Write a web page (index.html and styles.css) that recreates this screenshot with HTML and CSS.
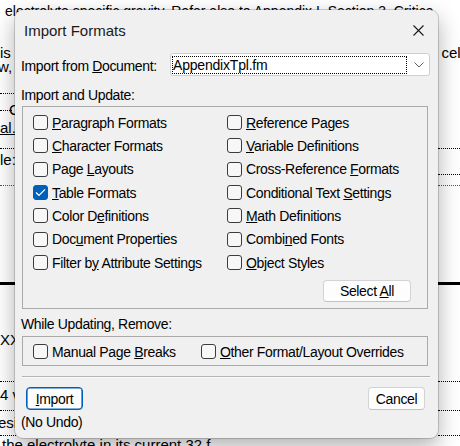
FILE: index.html
```html
<!DOCTYPE html>
<html>
<head>
<meta charset="utf-8">
<link rel="stylesheet" href="styles.css">
</head>
<body>
<div class="doc">
  <div class="dl r1"><span class="topline">electrolyte specific gravity. Refer also to Appendix I, Section 3, Critica</span></div>
  <div class="dl r2"><span>is</span><span class="rt">cell</span></div>
  <div class="dl r3"><span class="cut">w,</span></div>
  <div class="dl r4"><span class="dot"></span></div>
  <div class="dl r5"><span class="dot short"></span><span class="cut2">C</span></div>
  <div class="dl r6"><span class="ul">al.</span></div>
  <div class="dl r7"><span class="dot"></span><span class="dot r"></span></div>
  <div class="dl r8"><span>le:</span></div>
  <div class="dl r9"><span></span><span class="dot r"></span></div>
  <div class="dl r10"><span class="dot light"></span><span class="dot r light"></span></div>
  <div class="dl r11"><span class="thick"></span></div>
  <div class="dl r12"><span>XX</span></div>
  <div class="dl r13"><span class="dot"></span><span class="dot r"></span></div>
  <div class="dl r14"><span>4 v</span></div>
  <div class="dl r15"><span class="dot"></span><span class="dot r"></span></div>
  <div class="dl r16"><span class="cut">esis</span></div>
  <div class="dl r17"><span class="dot"></span><span class="dot r"></span></div>
  <div class="dl r18"><span class="bottomline">the electrolyte in its current 32 f</span></div>
</div>

<div class="dialog">
  <div class="titlebar">
    <span class="title">Import Formats</span>
    <svg class="close" width="11" height="11" viewBox="0 0 11 11"><path d="M0.5 0.5 L10.5 10.5 M10.5 0.5 L0.5 10.5" stroke="#1a1a1a" stroke-width="1.1" fill="none"/></svg>
  </div>
  <div class="body">
    <div class="docrow">
      <span class="lbl">Import from <u>D</u>ocument:</span>
      <div class="combo">
        <div class="combo-text">AppendixTpl.fm</div>
        <svg class="chev" width="10" height="6" viewBox="0 0 10 6"><path d="M0.5 0.5 L5 5 L9.5 0.5" stroke="#606060" stroke-width="1" fill="none"/></svg>
      </div>
    </div>

    <div class="section-label first">Import and Update:</div>
    <div class="group main">
      <div class="grid">
        <label class="item"><span class="cb"></span><span><u>P</u>aragraph Formats</span></label>
        <label class="item"><span class="cb"></span><span><u>R</u>eference Pages</span></label>
        <label class="item"><span class="cb"></span><span><u>C</u>haracter Formats</span></label>
        <label class="item"><span class="cb"></span><span><u>V</u>ariable Definitions</span></label>
        <label class="item"><span class="cb"></span><span>Page <u>L</u>ayouts</span></label>
        <label class="item"><span class="cb"></span><span>Cross-Reference <u>F</u>ormats</span></label>
        <label class="item"><span class="cb on"><svg width="11" height="9" viewBox="0 0 11 9"><path d="M1 4.6 L4 7.4 L10 1.4" stroke="#fff" stroke-width="1.3" fill="none"/></svg></span><span><u>T</u>able Formats</span></label>
        <label class="item"><span class="cb"></span><span>Conditional Text <u>S</u>ettings</span></label>
        <label class="item"><span class="cb"></span><span>Color D<u>e</u>finitions</span></label>
        <label class="item"><span class="cb"></span><span><u>M</u>ath Definitions</span></label>
        <label class="item"><span class="cb"></span><span>Doc<u>u</u>ment Properties</span></label>
        <label class="item"><span class="cb"></span><span>Combi<u>n</u>ed Fonts</span></label>
        <label class="item"><span class="cb"></span><span>Filter b<u>y</u> Attribute Settings</span></label>
        <label class="item"><span class="cb"></span><span><u>O</u>bject Styles</span></label>
      </div>
      <div class="btnrow"><button class="btn selall">Select <u>A</u>ll</button></div>
    </div>

    <div class="section-label second">While Updating, Remove:</div>
    <div class="group remove">
      <label class="item w1"><span class="cb"></span><span>Manual Page <u>B</u>reaks</span></label>
      <label class="item"><span class="cb"></span><span><u>O</u>ther Format/Layout Overrides</span></label>
    </div>

    <div class="sep"></div>

    <div class="actions">
      <button class="btn primary"><u>I</u>mport</button>
      <button class="btn cancel">Cancel</button>
    </div>
    <div class="note">(No Undo)</div>
  </div>
</div>
</body>
</html>
```

FILE: styles.css
```css
html, body {
  margin: 0;
  padding: 0;
  background: #fff;
}
body {
  width: 460px;
  height: 446px;
  overflow: hidden;
  position: relative;
  font-family: "Liberation Sans", Arial, sans-serif;
  color: #000;
}

/* background document */
.doc {
  font-size: 15px;
}
.dl {
  height: 10px;
  line-height: 10px;
  display: flex;
  justify-content: space-between;
  align-items: center;
  white-space: nowrap;
}
.topline { font-size: 14px; padding-left: 5px; }
.bottomline { padding-left: 2px; }
.rt { padding-right: 0; margin-right: -4px; }
.cut { margin-left: -2px; }
.cut2 { margin-left: -3px; margin-right: auto; }
.ul { text-decoration: underline; }
.dot {
  display: inline-block;
  width: 16px;
  border-top: 1px dotted #000;
}
.dot.short { width: 12px; }
.dot.r { width: 22px; }
.dot.light { border-top-color: #555; }
.thick {
  display: block;
  width: 100%;
  height: 3px;
  background: #000;
}
.r1 { margin-top: 6px; }
.r2 { margin-top: 32px; }
.r3 { margin-top: 4px; }
.r4 { margin-top: 16px; }
.r5 { margin-top: 7px; }
.r6 { margin-top: 8px; }
.r7 { margin-top: 10px; }
.r8 { margin-top: 2px; }
.r9 { margin-top: 4px; }
.r10 { margin-top: 1px; }
.r11 { margin-top: 88px; }
.r12 { margin-top: 47px; }
.r13 { margin-top: 31px; }
.r14 { margin-top: 4px; }
.r15 { margin-top: 5px; }
.r16 { margin-top: 3px; }
.r17 { margin-top: 2px; }
.r18 { margin-top: 0; }

/* dialog */
.dialog {
  position: absolute;
  left: 15px;
  top: 10px;
  width: 423px;
  height: 428px;
  background: #f0f0f0;
  border-radius: 8px;
  box-shadow: 0 0 0 1px rgba(0,0,0,0.16), 0 8px 22px rgba(0,0,0,0.32);
  display: flex;
  flex-direction: column;
  font-size: 14px;
  letter-spacing: -0.35px;
}
.titlebar {
  height: 40px;
  display: flex;
  align-items: center;
  justify-content: space-between;
  padding: 0 14px 0 9px;
  flex: none;
}
.title {
  font-size: 15px;
  letter-spacing: 0;
  color: #1a1a1a;
}
.close { display: block; }

.body {
  padding: 0 8px 0 6px;
  display: flex;
  flex-direction: column;
}
.docrow {
  margin-top: 3px;
  height: 23px;
  display: flex;
  align-items: center;
  justify-content: space-between;
}
.lbl { padding-top: 3px; }
.combo {
  width: 260px;
  height: 23px;
  box-sizing: border-box;
  background: #fff;
  border: 1px solid #cfcfcf;
  border-radius: 3px;
  display: flex;
  align-items: center;
  padding: 1px;
}
.combo-text {
  width: 235px;
  height: 18px;
  box-sizing: border-box;
  border: 1px dotted #000;
  line-height: 17px;
  padding-left: 0;
  letter-spacing: -0.2px;
}
.chev { margin-left: 7px; display: block; }

.section-label {
  line-height: 18px;
  height: 18px;
}
.section-label.first { margin-top: 10px; }
.section-label.second { margin-top: 6px; }

.group {
  border: 1px solid #a9a9a9;
  margin: 0 2px 0 1px;
}
.group.main {
  margin-top: 2px;
  padding: 4px 16px 6px 10px;
}
.grid {
  display: grid;
  grid-template-columns: 194px 1fr;
  grid-auto-rows: 23.33px;
}
.item {
  display: flex;
  align-items: center;
  gap: 4px;
  white-space: nowrap;
}
.cb {
  width: 15px;
  height: 15px;
  box-sizing: border-box;
  border: 1px solid #3c3c3c;
  border-radius: 3px;
  background: #f7f7f7;
  flex: none;
  display: flex;
  align-items: center;
  justify-content: center;
}
.cb.on {
  background: #005fb8;
  border-color: #005fb8;
}
.cb svg { display: block; }

.btnrow {
  margin-top: 6px;
  display: flex;
  justify-content: flex-end;
}
.btn {
  font-family: "Liberation Sans", Arial, sans-serif;
  font-size: 14px;
  letter-spacing: -0.35px;
  color: #000;
  background: #fdfdfd;
  border: 1px solid #d3d3d3;
  border-bottom-color: #c2c2c2;
  border-radius: 4px;
  padding: 0;
  height: 23px;
  margin: 0;
}
.selall { width: 88px; height: 22px; }

.group.remove {
  margin-top: 3px;
  height: 30px;
  box-sizing: border-box;
  padding: 1px 10px 0 10px;
  display: flex;
  align-items: center;
}
.item.w1 { width: 168px; }

.sep {
  margin: 10px 0 0 1px;
  height: 1px;
  background: #b4b4b4;
  border-bottom: 1px solid #fafafa;
}

.actions {
  margin-top: 9px;
  display: flex;
  justify-content: space-between;
  padding: 0 5px;
}
.actions .btn { width: 57px; }
.btn.primary {
  border: 1px solid #005fb8;
  box-shadow: inset 0 0 0 0.6px #005fb8;
}
.note {
  margin-top: 3px;
  line-height: 18px;
}
```
